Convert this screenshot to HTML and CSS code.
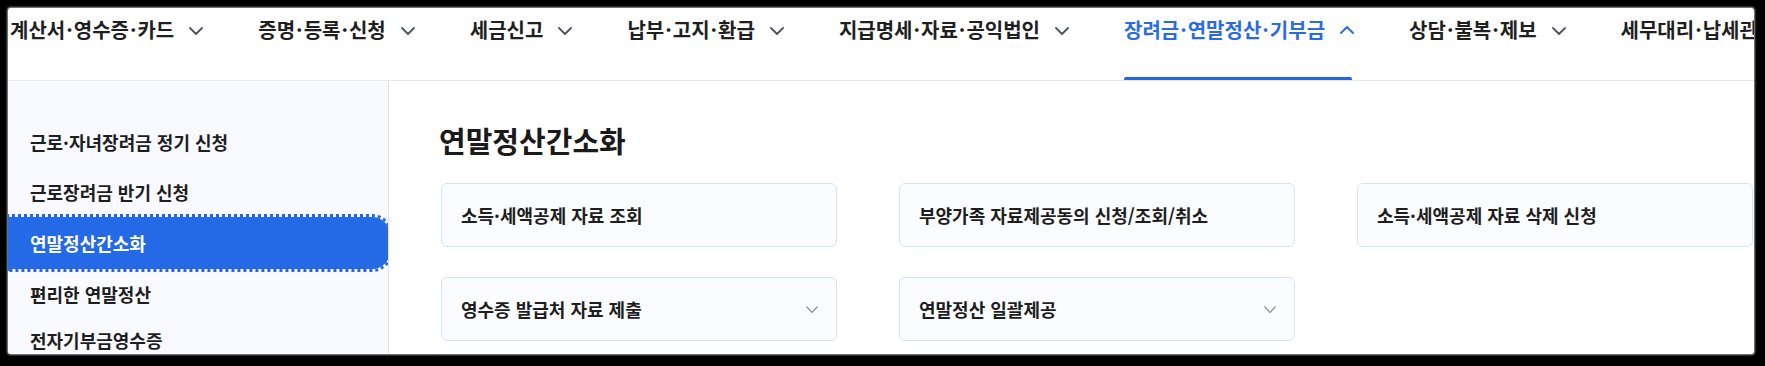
FILE: index.html
```html
<!DOCTYPE html>
<html lang="ko">
<head>
<meta charset="utf-8">
<title>연말정산간소화</title>
<link rel="stylesheet" href="styles.css">
</head>
<body>
<div class="frame">
  <nav class="gnb">
    <div class="gnb-item"><span>계산서<i class="dot">·</i>영수증<i class="dot">·</i>카드</span><svg class="chev" viewBox="0 0 14 8"><path d="M1 1l6 6 6-6"/></svg></div>
    <div class="gnb-item"><span>증명<i class="dot">·</i>등록<i class="dot">·</i>신청</span><svg class="chev" viewBox="0 0 14 8"><path d="M1 1l6 6 6-6"/></svg></div>
    <div class="gnb-item"><span>세금신고</span><svg class="chev" viewBox="0 0 14 8"><path d="M1 1l6 6 6-6"/></svg></div>
    <div class="gnb-item"><span>납부<i class="dot">·</i>고지<i class="dot">·</i>환급</span><svg class="chev" viewBox="0 0 14 8"><path d="M1 1l6 6 6-6"/></svg></div>
    <div class="gnb-item"><span>지급명세<i class="dot">·</i>자료<i class="dot">·</i>공익법인</span><svg class="chev" viewBox="0 0 14 8"><path d="M1 1l6 6 6-6"/></svg></div>
    <div class="gnb-item active"><span>장려금<i class="dot">·</i>연말정산<i class="dot">·</i>기부금</span><svg class="chev" viewBox="0 0 14 8"><path d="M1 7l6-6 6 6"/></svg></div>
    <div class="gnb-item"><span>상담<i class="dot">·</i>불복<i class="dot">·</i>제보</span><svg class="chev" viewBox="0 0 14 8"><path d="M1 1l6 6 6-6"/></svg></div>
    <div class="gnb-item"><span>세무대리<i class="dot">·</i>납세관리</span><svg class="chev" viewBox="0 0 14 8"><path d="M1 1l6 6 6-6"/></svg></div>
  </nav>
  <div class="content">
    <aside class="lnb">
      <div class="lnb-item">근로·자녀장려금 정기 신청</div>
      <div class="lnb-item">근로장려금 반기 신청</div>
      <div class="lnb-item active">연말정산간소화</div>
      <div class="lnb-item">편리한 연말정산</div>
      <div class="lnb-item last">전자기부금영수증</div>
    </aside>
    <main class="main">
      <h2 class="title">연말정산간소화</h2>
      <div class="cards">
        <div class="card"><span>소득·세액공제 자료 조회</span></div>
        <div class="card"><span>부양가족 자료제공동의 신청/조회/취소</span></div>
        <div class="card"><span>소득·세액공제 자료 삭제 신청</span></div>
        <div class="card"><span>영수증 발급처 자료 제출</span><svg class="card-chev" viewBox="0 0 12 7"><path d="M0.5 0.5l5.5 6 5.5-6"/></svg></div>
        <div class="card"><span>연말정산 일괄제공</span><svg class="card-chev" viewBox="0 0 12 7"><path d="M0.5 0.5l5.5 6 5.5-6"/></svg></div>
      </div>
    </main>
  </div>
</div>
</body>
</html>
```

FILE: styles.css
```css
* { box-sizing: border-box; }
html, body { margin: 0; padding: 0; }
body {
  background: #000;
  font-family: "Noto Sans CJK KR", "Noto Sans", sans-serif;
  color: #1e1e1e;
  width: 1765px;
  height: 366px;
  overflow: hidden;
}
.frame {
  margin: 8px 11px 0 8px;
  width: 1746px;
  height: 346px;
  background: #fff;
  border-radius: 3px;
  overflow: hidden;
  display: flex;
  flex-direction: column;
  box-shadow: 0 0 2px 1px #9a9a9a;
}
.gnb {
  height: 73px;
  flex: 0 0 73px;
  border-bottom: 1px solid #e6e8ec;
  display: flex;
  gap: 55px;
  padding-left: 2px;
  white-space: nowrap;
  overflow: hidden;
}
.gnb-item {
  position: relative;
  display: flex;
  align-items: flex-start;
  gap: 15px;
  padding-top: 7px;
  font-size: 20px;
  line-height: 30px;
  font-weight: 600;
  color: #1f1f1f;
  flex: 0 0 auto;
}
.dot {
  font-style: normal;
  margin: 0 1px;
}
.gnb-item .chev {
  width: 14px;
  height: 8px;
  margin-top: 12px;
  fill: none;
  stroke: #50555d;
  stroke-width: 1.8;
  stroke-linecap: round;
  stroke-linejoin: round;
}
.gnb-item.active { color: #2a6ae6; }
.gnb-item.active .chev { stroke: #2a6ae6; margin-top: 11px; }
.gnb-item.active::after {
  content: "";
  position: absolute;
  left: 0;
  right: 2px;
  bottom: -1px;
  height: 4px;
  border-radius: 2px;
  background: #2466e3;
}
.content {
  flex: 1;
  display: flex;
  min-height: 0;
}
.lnb {
  width: 381px;
  flex: 0 0 381px;
  background: #f8faff;
  border-right: 1px solid #dde5f3;
  padding-top: 36px;
  overflow: hidden;
}
.lnb-item {
  height: 50px;
  display: flex;
  align-items: center;
  padding-left: 22px;
  font-size: 18px;
  font-weight: 600;
  color: #1e1e1e;
}
.lnb-item.last { height: 42px; }
.lnb-item.active {
  height: 52px;
  background: #2469e6;
  color: #fff;
  font-weight: 700;
  border-radius: 0 18px 18px 0;
  outline: 3px dotted #2563eb;
  margin-right: -2px;
}
.main {
  flex: 1;
  padding: 39px 0 0 52px;
}
.title {
  margin: 0 0 23px -2px;
  font-size: 29px;
  line-height: 40px;
  font-weight: 700;
  color: #1a1a1a;
}
.cards {
  display: grid;
  grid-template-columns: repeat(3, 396px);
  grid-auto-rows: 64px;
  column-gap: 62px;
  row-gap: 30px;
}
.card {
  border: 1px solid #d6e2f8;
  border-radius: 6px;
  background: #fbfcff;
  display: flex;
  align-items: center;
  justify-content: space-between;
  padding: 0 18px 0 19px;
  font-size: 18px;
  font-weight: 600;
  color: #1e1e1e;
}
.card-chev {
  width: 12px;
  height: 7px;
  fill: none;
  stroke: #8a9099;
  stroke-width: 1.2;
}
```
